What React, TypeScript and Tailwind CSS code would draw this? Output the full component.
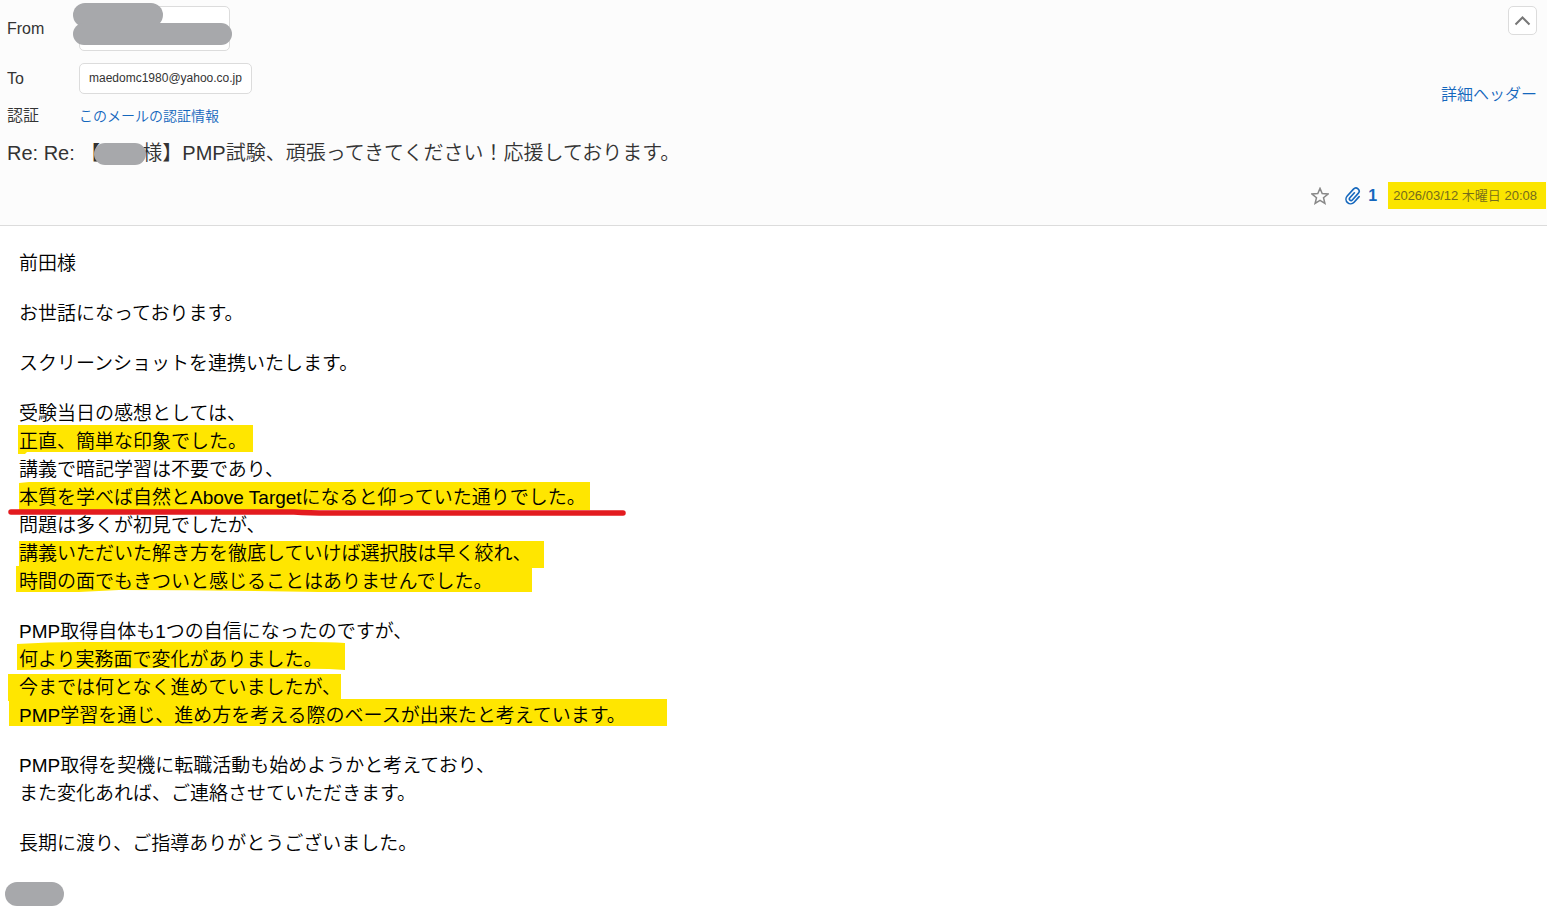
import type { ReactNode } from 'react';

interface Line { text: string; marker?: string; underline?: string; }

// marker and underline are strokes drawn from the top left corner of their line
const paragraphs: Line[][] = [
  [{ text: '前田様' }],
  [{ text: 'お世話になっております。' }],
  [{ text: 'スクリーンショットを連携いたします。' }],
  [
    { text: '受験当日の感想としては、' },
    { text: '正直、簡単な印象でした。', marker: 'M-1 -3H234V24H8L6 26H-1Z' },
    { text: '講義で暗記学習は不要であり、' },
    {
      text: '本質を学べば自然とAbove Targetになると仰っていた通りでした。',
      marker: 'M0 -1L10 -2H571V26H0Z',
      underline: 'M-8 28H275Q290 29 310 29H604',
    },
    { text: '問題は多くが初見でしたが、' },
    { text: '講義いただいた解き方を徹底していけば選択肢は早く絞れ、', marker: 'M0 1H525V28H0Z' },
    { text: '時間の面でもきついと感じることはありませんでした。', marker: 'M-3 -2H513V24H300Q200 22 100 22L60 24H-3Z' },
  ],
  [
    { text: 'PMP取得自体も1つの自信になったのですが、' },
    { text: '何より実務面で変化がありました。', marker: 'M-2 -2Q30 -4 60 -4H290Q310 -4 326 -3V24L310 23Q160 21 60 23L-2 24Z' },
    { text: '今までは何となく進めていましたが、', marker: 'M-11 0H322V27H-11Z' },
    { text: 'PMP学習を通じ、進め方を考える際のベースが出来たと考えています。', marker: 'M-10 -3H648V24H-10Z' },
  ],
  [{ text: 'PMP取得を契機に転職活動も始めようかと考えており、' }, { text: 'また変化あれば、ご連絡させていただきます。' }],
  [{ text: '長期に渡り、ご指導ありがとうございました。' }],
];

function HeaderRow({ label, children }: { label: string; children: ReactNode }) {
  return (
    <div className="flex items-center">
      <dt className="w-[72px] shrink-0">{label}</dt>
      <dd className="min-w-0">{children}</dd>
    </div>
  );
}

function BodyLine({ text, marker, underline }: Line) {
  return (
    <span className="relative block">
      {(marker || underline) && (
        <svg className="absolute left-0 top-0 -z-10 overflow-visible" width="1" height="1" fill="none" aria-hidden="true">
          {marker && <path d={marker} fill="#ffe600" />}
          {underline && <path d={underline} stroke="#e31b1f" strokeWidth="5.5" strokeLinecap="round" />}
        </svg>
      )}
      {text}
    </span>
  );
}

export default function App() {
  return (
    <main className="min-h-screen bg-white font-['Liberation_Sans','Noto_Sans_CJK_JP',sans-serif] font-[350] text-black">
      <header className="border-b border-[#dcdcdc] bg-[#fcfcfc] pb-4 pt-1.5 text-[#333]">
        <div className="flex justify-between pl-[7px] pr-2.5">
          <dl className="text-base leading-6">
            <HeaderRow label="From">
              <div className="relative h-[45px] w-[151px] rounded-[5px] border border-[#dcdcdc] bg-white">
                <span className="absolute -left-[7px] -top-1 h-6 w-[90px] rounded-full bg-[#a7a8ab]" />
                <span className="absolute -left-[7px] top-4 h-[22px] w-[159px] rounded-full bg-[#a7a8ab]" />
              </div>
            </HeaderRow>
            <div className="h-3" />
            <HeaderRow label="To">
              <div className="rounded-[5px] border border-[#dcdcdc] bg-white px-[9px] py-1.5 text-xs leading-[17px]">maedomc1980@yahoo.co.jp</div>
            </HeaderRow>
            <div className="h-2.5" />
            <HeaderRow label="認証">
              <a href="#auth" className="block text-sm leading-6 text-[#1467bd]">このメールの認証情報</a>
            </HeaderRow>
          </dl>
          <div className="flex flex-col items-end gap-12">
            <button type="button" aria-label="ヘッダーを閉じる" className="flex size-[29px] items-center justify-center rounded-[5px] border border-[#dcdcdc] bg-white">
              <svg width="17" height="10" viewBox="0 0 17 10" fill="none" stroke="#777" strokeWidth="2"><path d="M1.5 8.5L8.5 1.5L15.5 8.5" /></svg>
            </button>
            <a href="#headers" className="text-base leading-6 text-[#1467bd]">詳細ヘッダー</a>
          </div>
        </div>
        <h1 className="mt-2.5 px-[7px] text-xl font-[350] leading-[30px]">
          Re: Re: 【
          <span className="relative inline-block w-[42px]">
            <span className="absolute -left-1.5 -top-[17px] h-[22px] w-[52px] rounded-full bg-[#a7a8ab]" />
          </span>
          様】PMP試験、頑張ってきてください！応援しております。
        </h1>
        <div className="mt-3.5 flex items-center justify-end pr-px">
          <button type="button" aria-label="スター" className="mr-4">
            <svg width="18" height="18" viewBox="0 0 18 18" fill="none" stroke="#888" strokeWidth="1.5">
              <path d="M9 1.4L11.2 6.6L17 7L12.5 10.7L13.9 16.3L9 13.3L4.1 16.3L5.5 10.7L1 7L6.8 6.6Z" />
            </svg>
          </button>
          <button type="button" aria-label="添付ファイル" className="mr-[11px] flex items-center gap-1.5 text-base font-bold text-[#1467bd]">
            <svg width="17" height="18" viewBox="0 0 18 18" fill="none" stroke="currentColor" strokeWidth="1.7" strokeLinecap="round">
              <path transform="rotate(42 9 9)" d="M13.9 5.5V13.5A4.9 4.9 0 0 1 4.1 13.5V3.6A3.4 3.4 0 0 1 10.9 3.6V13A1.75 1.75 0 0 1 7.4 13V5.8" />
            </svg>
            1
          </button>
          <time dateTime="2026-03-12T20:08" className="bg-[#fbe500] pl-[5px] pr-[9px] text-[13px] leading-[27px] text-[#756c1c]">2026/03/12 木曜日 20:08</time>
        </div>
      </header>
      <article className="isolate space-y-[22px] px-[19px] pt-6 text-[19px] leading-7">
        {paragraphs.map((lines, i) => (
          <p key={i}>{lines.map(line => <BodyLine key={line.text} {...line} />)}</p>
        ))}
      </article>
      <footer className="px-[5px] pt-6">
        <div className="h-6 w-[59px] rounded-full bg-[#a7a8ab]" />
      </footer>
    </main>
  );
}
